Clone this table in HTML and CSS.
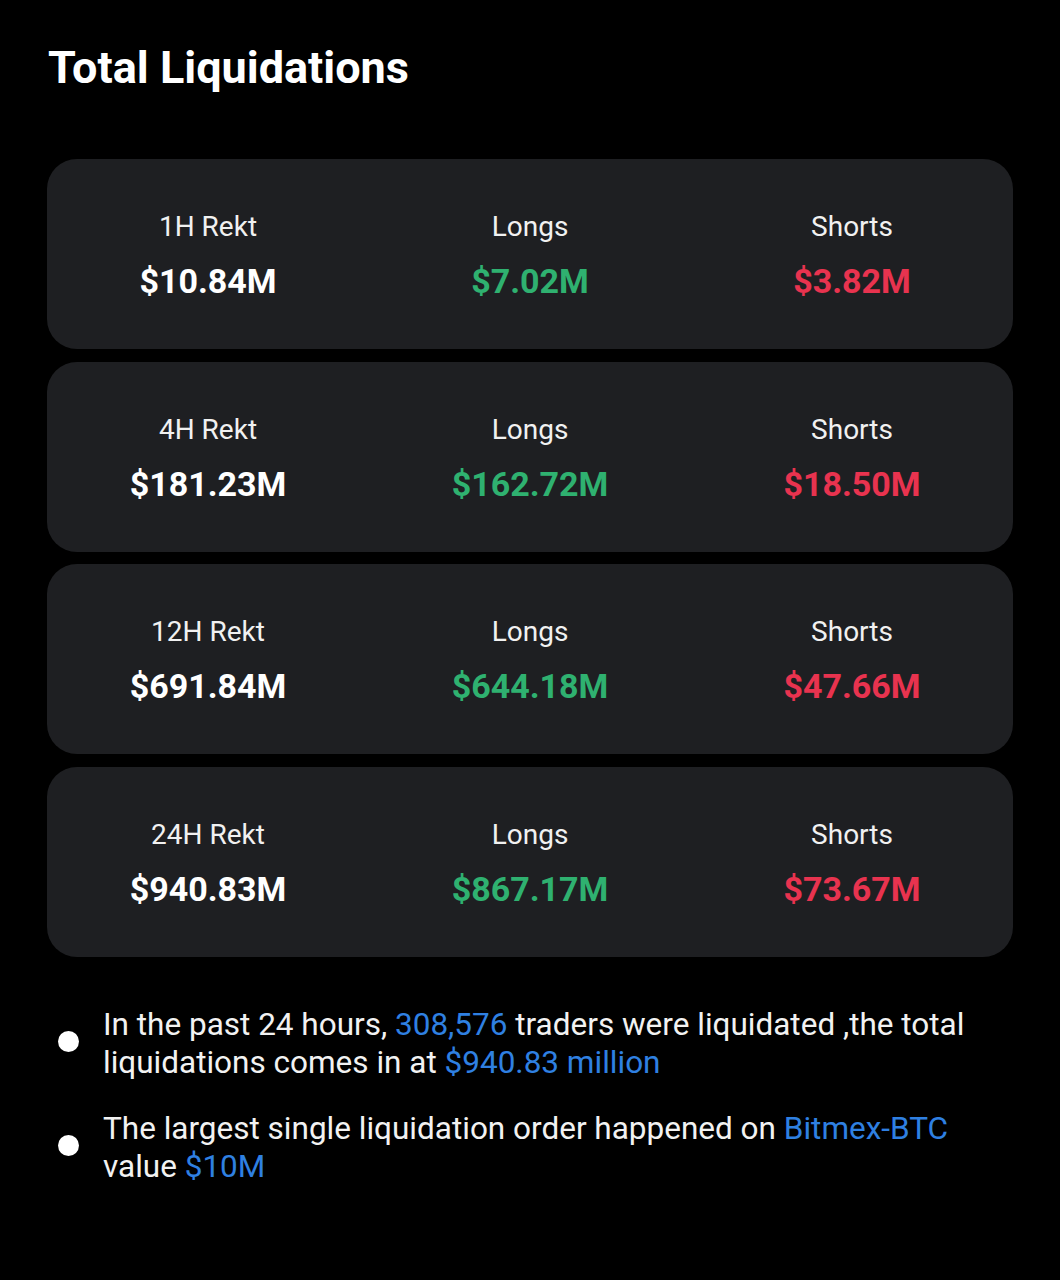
FILE: index.html
```html
<!DOCTYPE html>
<html lang="en">
<head>
<meta charset="utf-8">
<title>Total Liquidations</title>
<link rel="stylesheet" href="styles.css">
</head>
<body>
<main class="page">
  <h1 class="title">Total Liquidations</h1>
  <section class="cards">
    <div class="card">
      <div class="cell"><div class="label">1H Rekt</div><div class="value">$10.84M</div></div>
      <div class="cell"><div class="label">Longs</div><div class="value long">$7.02M</div></div>
      <div class="cell"><div class="label">Shorts</div><div class="value short">$3.82M</div></div>
    </div>
    <div class="card">
      <div class="cell"><div class="label">4H Rekt</div><div class="value">$181.23M</div></div>
      <div class="cell"><div class="label">Longs</div><div class="value long">$162.72M</div></div>
      <div class="cell"><div class="label">Shorts</div><div class="value short">$18.50M</div></div>
    </div>
    <div class="card">
      <div class="cell"><div class="label">12H Rekt</div><div class="value">$691.84M</div></div>
      <div class="cell"><div class="label">Longs</div><div class="value long">$644.18M</div></div>
      <div class="cell"><div class="label">Shorts</div><div class="value short">$47.66M</div></div>
    </div>
    <div class="card">
      <div class="cell"><div class="label">24H Rekt</div><div class="value">$940.83M</div></div>
      <div class="cell"><div class="label">Longs</div><div class="value long">$867.17M</div></div>
      <div class="cell"><div class="label">Shorts</div><div class="value short">$73.67M</div></div>
    </div>
  </section>
  <ul class="notes">
    <li class="note"><span class="dot"></span><p class="text">In the past 24 hours, <span class="hl">308,576</span> traders were liquidated ,the total liquidations comes in at <span class="hl">$940.83 million</span></p></li>
    <li class="note"><span class="dot"></span><p class="text">The largest single liquidation order happened on <span class="hl">Bitmex-BTC</span> value <span class="hl">$10M</span></p></li>
  </ul>
</main>
</body>
</html>
```

FILE: styles.css
```css
html, body {
  margin: 0;
  padding: 0;
  background: #000;
}
body {
  font-family: Roboto, "Noto Sans", "Liberation Sans", sans-serif;
  color: #fff;
  width: 1060px;
  min-height: 1280px;
}
.page {
  padding: 42px 47px 0 47px;
}
.title {
  margin: 0 0 65px 1px;
  font-size: 45px;
  line-height: 52px;
  font-weight: 700;
  color: #fff;
}
.cards {
  display: flex;
  flex-direction: column;
  gap: 12.7px;
}
.card {
  background: #1e1f22;
  border-radius: 30px;
  height: 190px;
  box-sizing: border-box;
  padding-top: 51px;
  display: grid;
  grid-template-columns: 1fr 1fr 1fr;
}
.cell {
  display: flex;
  flex-direction: column;
  align-items: center;
}
.label {
  font-size: 28px;
  line-height: 34px;
  color: #f1f1f1;
  font-weight: 400;
}
.value {
  margin-top: 17px;
  font-size: 34px;
  line-height: 40px;
  font-weight: 700;
  color: #fff;
}
.value.long { color: #2fb170; }
.value.short { color: #e8334f; }
.notes {
  list-style: none;
  margin: 49px 0 0 0;
  padding: 0;
  display: flex;
  flex-direction: column;
  gap: 28px;
}
.note {
  display: flex;
  align-items: flex-start;
  gap: 24px;
}
.dot {
  flex: none;
  width: 21px;
  height: 21px;
  border-radius: 50%;
  background: #fff;
  margin: 25px 0 0 11px;
}
.text {
  margin: 0;
  font-size: 31.5px;
  line-height: 38px;
  color: #f2f2f2;
}
.hl { color: #2f80e2; }
```
